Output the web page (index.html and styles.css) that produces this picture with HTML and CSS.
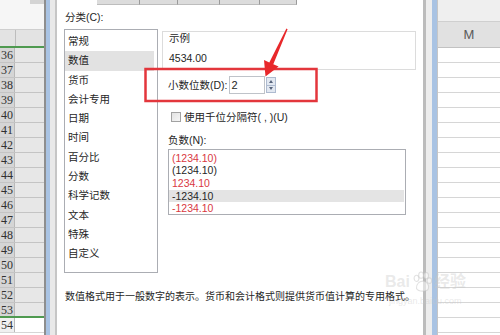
FILE: index.html
```html
<!DOCTYPE html>
<html lang="zh-CN">
<head>
    <meta charset="UTF-8">
    <meta name="viewport" content="width=device-width, initial-scale=1.0">
    <title>设置单元格格式</title>
    <link rel="stylesheet" href="styles.css">
</head>
<body>
<div class="screen">
    <!-- Spreadsheet behind the dialog, left part -->
    <div class="sheet sheet-left">
        <div class="sheet-top"><span class="top-tab"></span></div>
        <div class="col-header"><span class="rh"></span><span class="ch"></span></div>
        <div class="row sel"><span class="rh">36</span><span class="cell"></span></div>
        <div class="row sel"><span class="rh">37</span><span class="cell"></span></div>
        <div class="row sel"><span class="rh">38</span><span class="cell"></span></div>
        <div class="row sel"><span class="rh">39</span><span class="cell"></span></div>
        <div class="row sel"><span class="rh">40</span><span class="cell"></span></div>
        <div class="row sel"><span class="rh">41</span><span class="cell"></span></div>
        <div class="row sel"><span class="rh">42</span><span class="cell"></span></div>
        <div class="row sel"><span class="rh">43</span><span class="cell"></span></div>
        <div class="row sel"><span class="rh">44</span><span class="cell"></span></div>
        <div class="row sel"><span class="rh">45</span><span class="cell"></span></div>
        <div class="row sel"><span class="rh">46</span><span class="cell"></span></div>
        <div class="row sel"><span class="rh">47</span><span class="cell"></span></div>
        <div class="row sel"><span class="rh">48</span><span class="cell"></span></div>
        <div class="row sel"><span class="rh">49</span><span class="cell"></span></div>
        <div class="row sel"><span class="rh">50</span><span class="cell"></span></div>
        <div class="row sel"><span class="rh">51</span><span class="cell"></span></div>
        <div class="row sel"><span class="rh">52</span><span class="cell"></span></div>
        <div class="row sel last-sel"><span class="rh">53</span><span class="cell"></span></div>
        <div class="row"><span class="rh">54</span><span class="cell"></span></div>
    </div>

    <div class="frame frame-left"></div>

    <!-- Format cells dialog, number tab -->
    <div class="dialog">
        <div class="tabs">
            <span class="tab t1"></span>
            <span class="tab t2"></span>
            <span class="tab t3"></span>
            <span class="tab t4"></span>
            <span class="tab t5"></span>
        </div>
        <div class="dlg-body">
            <div class="label cat-label">分类(C):</div>
            <div class="cols">
                <ul class="cat-list">
                    <li>常规</li>
                    <li class="active">数值</li>
                    <li>货币</li>
                    <li>会计专用</li>
                    <li>日期</li>
                    <li>时间</li>
                    <li>百分比</li>
                    <li>分数</li>
                    <li>科学记数</li>
                    <li>文本</li>
                    <li>特殊</li>
                    <li>自定义</li>
                </ul>
                <div class="fmt">
                    <div class="sample">
                        <div class="label sample-title">示例</div>
                        <div class="label sample-value">4534.00</div>
                    </div>
                    <div class="decimals">
                        <span class="label">小数位数(D):</span>
                        <span class="num-input">2</span>
                        <span class="spinner">
                            <span class="spin up"></span>
                            <span class="spin down"></span>
                        </span>
                    </div>
                    <div class="check-row">
                        <span class="checkbox"></span>
                        <span class="label">使用千位分隔符( , )(U)</span>
                    </div>
                    <div class="label neg-label">负数(N):</div>
                    <ul class="neg-list">
                        <li class="red">(1234.10)</li>
                        <li>(1234.10)</li>
                        <li class="red">1234.10</li>
                        <li class="active">-1234.10</li>
                        <li class="red">-1234.10</li>
                    </ul>
                </div>
            </div>
            <p class="desc">数值格式用于一般数字的表示。货币和会计格式则提供货币值计算的专用格式。</p>
        </div>
    </div>

    <div class="frame frame-right"></div>

    <!-- Spreadsheet behind the dialog, right part -->
    <div class="sheet sheet-right">
        <div class="sheet-top"></div>
        <div class="col-header"><span class="ch">M</span></div>
        <div class="row"></div><div class="row"></div><div class="row"></div><div class="row"></div>
        <div class="row"></div><div class="row"></div><div class="row"></div><div class="row"></div>
        <div class="row"></div><div class="row"></div><div class="row"></div><div class="row"></div>
        <div class="row"></div><div class="row"></div><div class="row"></div><div class="row"></div>
        <div class="row"></div><div class="row"></div><div class="row"></div>
    </div>

    <!-- Red annotation drawn over the screenshot -->
    <svg class="marks" width="500" height="335" viewBox="0 0 500 335">
        <rect x="145.5" y="69" width="171" height="32" fill="none" stroke="#e3363c" stroke-width="2.5"/>
        <polygon points="286.4,28.6 287.6,29.2 273.3,64.2 278.6,66.6 265.5,76.5 264,60 269.3,62.4" fill="#e8282b"/>
    </svg>

    <!-- faint watermark -->
    <div class="watermark">
        <div class="wm-line">
            <span>Bai</span>
            <svg class="paw" width="22" height="22" viewBox="0 0 24 24">
                <ellipse cx="6" cy="8" rx="2.6" ry="3.4"/>
                <ellipse cx="11" cy="4.5" rx="2.6" ry="3.4"/>
                <ellipse cx="16.5" cy="5" rx="2.6" ry="3.4"/>
                <ellipse cx="20" cy="10.5" rx="2.4" ry="3"/>
                <path d="M6 19 C6 13 10 11 13 11 C17 11 20 15 19 19 C18 23 8 23 6 19 Z"/>
            </svg>
            <span>经验</span>
        </div>
        <div class="wm-url">jingyan.baidu.com</div>
    </div>
</div>
</body>
</html>
```

FILE: styles.css
```css
html, body {
    margin: 0;
    padding: 0;
}
body {
    width: 500px;
    height: 335px;
    overflow: hidden;
    background: #ffffff;
    font-family: "Liberation Sans", "Noto Sans CJK SC", sans-serif;
    font-size: 10.5px;
    color: #262626;
}
.screen {
    position: relative;
    display: flex;
    width: 500px;
    height: 335px;
}

/* spreadsheet pieces */
.sheet {
    flex: none;
    display: flex;
    flex-direction: column;
    overflow: hidden;
}
.sheet-left {
    width: 44px;
}
.sheet-right {
    flex: 1;
    border-left: 1px solid #c6c6c6;
}
.sheet-top {
    height: 30px;
    background: #f6f6f6;
    box-sizing: border-box;
    border-bottom: 1px solid #cfcfcf;
    display: flex;
    justify-content: flex-end;
}
.top-tab {
    width: 14px;
    height: 4px;
    background: #d4d4d4;
}
.sheet-right .sheet-top {
    height: 22px;
    background: #efefef;
}
.col-header {
    height: 18px;
    box-sizing: border-box;
    display: flex;
    background: #e3e3e3;
    border-bottom: 2px solid #4f9a50;
}
.sheet-right .col-header {
    height: 26px;
    border-bottom: 1px solid #c2c2c2;
    background: #e1e1e1;
}
.col-header .rh {
    width: 15px;
    border-right: 1px solid #bdbdbd;
}
.col-header .ch {
    flex: 1;
    display: flex;
    align-items: center;
    justify-content: center;
    font-size: 13px;
    color: #5a5a5a;
}
.row {
    height: 15px;
    box-sizing: border-box;
    display: flex;
    border-bottom: 1px solid #d6d6d6;
}
.row .rh {
    width: 15px;
    box-sizing: border-box;
    border-right: 1px solid #b9b9b9;
    text-align: right;
    padding-right: 1px;
    font-family: "Liberation Serif", serif;
    font-size: 12px;
    line-height: 14px;
    color: #303030;
    overflow: hidden;
    white-space: nowrap;
    background: #f0f0f0;
}
.row .cell {
    flex: 1;
}
.row.sel .rh {
    background: #d5d5d5;
    border-bottom: 0;
}
.row.sel .cell {
    background: #e7e7e7;
}
.row.sel {
    border-bottom-color: #c4c4c4;
}
.row.last-sel {
    border-bottom: 2px solid #4f9a50;
}

/* window frames around the dialog */
.frame {
    flex: none;
    height: 335px;
}
.frame-left {
    width: 13px;
    background: linear-gradient(to right,
        #8e8e8e 0, #8e8e8e 2px,
        #a9c3e3 2px, #a9c3e3 6px,
        #e9e9e9 6px, #e9e9e9 11px,
        #c6c6c6 11px, #c6c6c6 13px);
}
.frame-right {
    width: 14px;
    background: linear-gradient(to right,
        #bcbcbc 0, #bcbcbc 3px,
        #ededed 3px, #ededed 9px,
        #a9c3e3 9px, #a9c3e3 14px);
}

/* dialog */
.dialog {
    flex: none;
    width: 366px;
    height: 335px;
    background: #ffffff;
}
.tabs {
    display: flex;
    height: 5px;
    padding-left: 40px;
}
.tab {
    box-sizing: border-box;
    height: 5px;
    background: #dcdcdc;
    border-right: 1px solid #9a9a9a;
    border-bottom: 1px solid #bdbdbd;
}
.t1 { width: 43px; }
.t2 { width: 38px; }
.t3 { width: 42px; }
.t4 { width: 40px; }
.t5 { width: 37px; }

.dlg-body {
    padding: 0 7px;
}
.label {
    line-height: 12px;
    white-space: nowrap;
}
.cat-label {
    margin-top: 6px;
    padding-left: 1px;
}
.cols {
    display: flex;
    gap: 4px;
    margin-top: 6px;
}
ul {
    list-style: none;
    margin: 0;
}
.cat-list {
    width: 94px;
    height: 244px;
    box-sizing: border-box;
    border: 1px solid #abadb3;
    padding: 2px 3px 0 0;
}
.cat-list li {
    height: 19.3px;
    line-height: 19.3px;
    padding-left: 3px;
}
.cat-list li.active {
    background: #e2e2e2;
}

.fmt {
    width: 254px;
    padding-top: 2px;
}
.sample {
    height: 39px;
    box-sizing: border-box;
    border: 1px solid #dcdcdc;
    padding: 0 6px;
}
.sample-value {
    margin-top: 8px;
}
.decimals {
    display: flex;
    align-items: center;
    height: 18px;
    margin-top: 6px;
    padding-left: 6px;
}
.num-input {
    width: 36px;
    height: 18px;
    box-sizing: border-box;
    border: 1px solid #bfc3c9;
    margin-left: 1px;
    padding-left: 2px;
    line-height: 16px;
    font-size: 11px;
}
.spinner {
    display: flex;
    flex-direction: column;
    width: 10px;
    height: 16px;
    margin-left: 1px;
}
.spin {
    flex: 1;
    box-sizing: border-box;
    border: 1px solid #aebbd0;
    background: #e2e8f1;
    display: flex;
    align-items: center;
    justify-content: center;
}
.spin.down {
    border-top: 0;
}
.spin::after {
    content: "";
    border-left: 2.5px solid transparent;
    border-right: 2.5px solid transparent;
}
.spin.up::after {
    border-bottom: 3px solid #55627a;
}
.spin.down::after {
    border-top: 3px solid #55627a;
}
.check-row {
    display: flex;
    align-items: center;
    gap: 3px;
    margin-top: 17px;
    padding-left: 9px;
}
.checkbox {
    width: 10px;
    height: 10px;
    box-sizing: border-box;
    border: 1px solid #a2a2a2;
    background: linear-gradient(135deg, #e2e2e2, #f6f6f6);
}
.neg-label {
    margin-top: 11px;
    padding-left: 6px;
}
.neg-list {
    width: 238px;
    height: 66px;
    box-sizing: border-box;
    margin: 3px 0 0 6px;
    border: 1px solid #abadb3;
    padding: 1.5px 1px 0 0;
}
.neg-list li {
    height: 12.7px;
    line-height: 12.7px;
    padding-left: 3px;
}
.neg-list li.red {
    color: #d9383f;
}
.neg-list li.active {
    background: #e4e4e4;
}
.desc {
    margin: 18px 0 0 1px;
    font-size: 10px;
    line-height: 12px;
    white-space: nowrap;
}

/* overlays */
.marks {
    position: absolute;
    left: 0;
    top: 0;
    pointer-events: none;
}
.watermark {
    position: absolute;
    left: 385px;
    top: 272px;
    color: rgba(200, 200, 200, 0.4);
    pointer-events: none;
}
.wm-line {
    display: flex;
    align-items: center;
    gap: 1px;
    height: 20px;
    line-height: 20px;
    font-size: 16px;
    font-weight: bold;
}
.paw {
    fill: rgba(255, 255, 255, 0.5);
    stroke: rgba(190, 190, 190, 0.45);
    stroke-width: 1.2;
}
.wm-url {
    margin-top: 4px;
    padding-left: 4px;
    height: 10px;
    line-height: 10px;
    font-size: 9px;
}
```
